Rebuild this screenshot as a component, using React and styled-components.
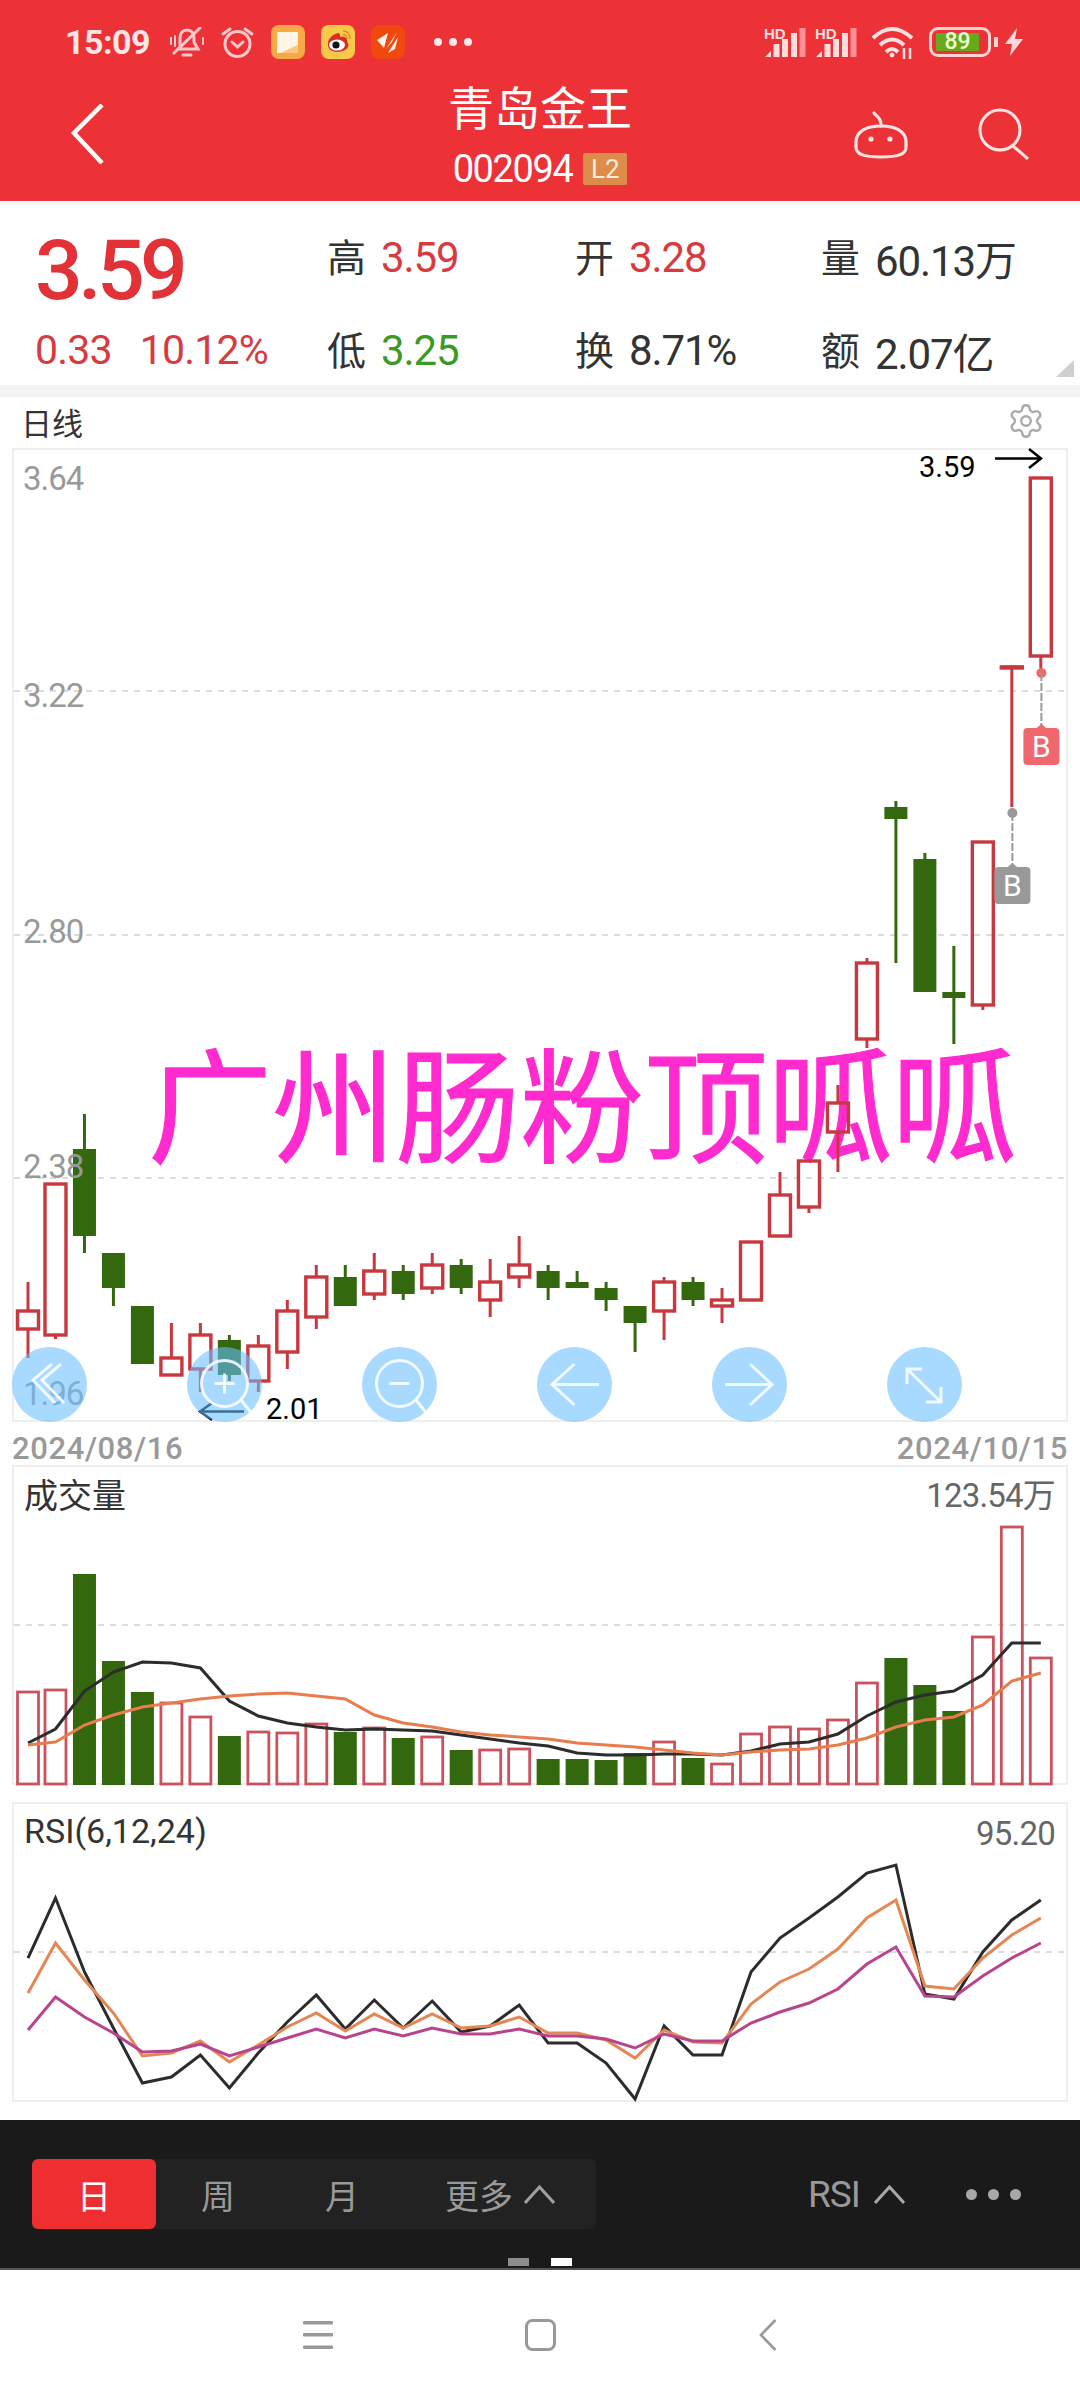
import React from "react";
import styled, { createGlobalStyle } from "styled-components";
import { Settings } from "lucide-react";

const RED = "#c8393f";
const GREEN = "#33680f";

// x of the n-th day, shared by all three charts
const dayX = (i) => (i === 0 ? 28 : 26.5 + 28.98 * i);

// [type, bodyTop, bodyBottom, wickTop, wickBottom]
const candles = [
    ["r", 1311, 1329, 1282, 1358],
    ["r", 1184, 1335, 1184, 1339],
    ["g", 1149, 1236, 1114, 1253],
    ["g", 1253, 1288, 1253, 1306],
    ["g", 1306, 1364, 1306, 1364],
    ["r", 1358, 1375, 1323, 1375],
    ["r", 1335, 1369, 1323, 1392],
    ["g", 1340, 1375, 1335, 1381],
    ["r", 1346, 1381, 1335, 1392],
    ["r", 1311, 1352, 1300, 1369],
    ["r", 1277, 1317, 1265, 1329],
    ["g", 1277, 1306, 1265, 1306],
    ["r", 1271, 1294, 1253, 1300],
    ["g", 1271, 1294, 1265, 1300],
    ["r", 1265, 1288, 1253, 1294],
    ["g", 1265, 1288, 1259, 1294],
    ["r", 1282, 1300, 1259, 1317],
    ["r", 1265, 1277, 1236, 1288],
    ["g", 1271, 1288, 1265, 1300],
    ["g", 1282, 1288, 1271, 1288],
    ["g", 1288, 1300, 1282, 1311],
    ["g", 1306, 1323, 1306, 1352],
    ["r", 1282, 1311, 1277, 1340],
    ["g", 1282, 1300, 1277, 1306],
    ["r", 1300, 1306, 1288, 1323],
    ["r", 1242, 1300, 1242, 1300],
    ["r", 1195, 1236, 1172, 1236],
    ["r", 1161, 1207, 1161, 1213],
    ["r", 1103, 1132, 1085, 1172],
    ["r", 963, 1039, 958, 1048],
    ["g", 807, 819, 801, 963],
    ["g", 859, 992, 853, 992],
    ["g", 992, 998, 946, 1044],
    ["r", 842, 1005, 842, 1010],
    ["r", 667, 668, 667, 807],
    ["r", 478, 656, 478, 668],
];

const volumeTops = [
    1692, 1690, 1574, 1661, 1692, 1703, 1717, 1736, 1732, 1733, 1724, 1732,
    1728, 1738, 1737, 1750, 1750, 1749, 1759, 1759, 1760, 1753, 1742, 1758,
    1764, 1734, 1727, 1729, 1720, 1683, 1658, 1685, 1711, 1637, 1527, 1658,
];

const volumeBlack = [
    1743, 1729, 1691, 1672, 1662, 1663, 1668, 1701, 1716, 1723, 1727, 1730,
    1729, 1730, 1731, 1735, 1739, 1743, 1746, 1753, 1755, 1755, 1754, 1754,
    1755, 1751, 1744, 1742, 1734, 1716, 1702, 1695, 1691, 1675, 1643, 1643,
];

const volumeOrange = [
    1745, 1742, 1725, 1715, 1707, 1703, 1699, 1696, 1694, 1693, 1696, 1699,
    1715, 1723, 1727, 1732, 1735, 1737, 1739, 1743, 1745, 1747, 1750, 1753,
    1755, 1752, 1750, 1749, 1745, 1738, 1727, 1720, 1717, 1705, 1681, 1673,
];

const rsiBlack = [
    1958, 1898, 1972, 2028, 2083, 2077, 2055, 2088, 2053, 2022, 1995, 2029,
    2000, 2028, 2001, 2032, 2026, 2005, 2043, 2043, 2063, 2099, 2026, 2055,
    2055, 1972, 1938, 1918, 1897, 1873, 1865, 1994, 1999, 1952, 1920, 1900,
];

const rsiOrange = [
    1993, 1943, 1980, 2013, 2056, 2053, 2041, 2062, 2045, 2027, 2013, 2031,
    2014, 2028, 2014, 2028, 2026, 2017, 2033, 2033, 2040, 2058, 2030, 2042,
    2043, 2004, 1982, 1969, 1949, 1918, 1900, 1986, 1989, 1958, 1935, 1918,
];

const rsiPink = [
    2030, 1997, 2017, 2033, 2052, 2051, 2044, 2056, 2047, 2038, 2029, 2038,
    2029, 2036, 2028, 2034, 2034, 2029, 2036, 2036, 2039, 2048, 2034, 2041,
    2041, 2023, 2012, 2003, 1989, 1964, 1947, 1996, 1997, 1976, 1958, 1943,
];

const toPoints = (values) =>
    values.map((y, i) => `${dayX(i).toFixed(1)},${y}`).join(" ");

function Candle({ i, data }) {
    const [type, top, bottom, wickTop, wickBottom] = data;
    const x = dayX(i);
    const color = type === "r" ? RED : GREEN;
    return (
        <g>
            <line x1={x} x2={x} y1={wickTop} y2={top} stroke={color} strokeWidth="3" />
            <line x1={x} x2={x} y1={bottom} y2={wickBottom} stroke={color} strokeWidth="3" />
            {type === "r" ? (
                <rect x={x - 10.5} y={top} width="21" height={bottom - top} fill="none" stroke={color} strokeWidth="3.4" />
            ) : (
                <rect x={x - 11.5} y={top} width="23" height={bottom - top} fill={color} />
            )}
        </g>
    );
}

function TradeMark({ x, dotY, tagY, color }) {
    return (
        <g>
            <circle cx={x} cy={dotY} r="5" fill={color} />
            <line x1={x} x2={x} y1={dotY} y2={tagY} stroke="#999" strokeWidth="2" strokeDasharray="8 2" />
            <path d={`M${x - 6} ${tagY + 1} L${x} ${tagY - 4} L${x + 6} ${tagY + 1} Z`} fill={color} />
            <rect x={x - 18} y={tagY} width="36" height="37" rx="4" fill={color} />
            <TagText x={x} y={tagY + 29}>B</TagText>
        </g>
    );
}

function GridLine({ y }) {
    return <line x1="14" x2="1066" y1={y} y2={y} stroke="#dcdcdc" strokeWidth="2" strokeDasharray="6 6" />;
}

function PriceChart() {
    return (
        <ChartSvg width="1056" height="974" viewBox="12 448 1056 974">
            <GridLine y={691} />
            <GridLine y={935} />
            <GridLine y={1178} />
            {candles.map((c, i) => (
                <Candle key={i} i={i} data={c} />
            ))}
            <TradeMark x={1012.4} dotY={813} tagY={867} color="#999999" />
            <TradeMark x={1041.4} dotY={673} tagY={728} color="#f0686e" />
            <line x1="1001" x2="1024" y1="667" y2="667" stroke={RED} strokeWidth="3" />
            <MarkText x="919" y="477">3.59</MarkText>
            <path d="M995 458.5 H1041 M1029 449 L1041 458.5 L1029 468" fill="none" stroke="#000" strokeWidth="2.5" />
            <path d="M244 1411.5 H200 M212 1403 L200 1411.5 L212 1420" fill="none" stroke="#000" strokeWidth="2.5" />
            <MarkText x="266" y="1419">2.01</MarkText>
        </ChartSvg>
    );
}

function VolumeChart() {
    return (
        <ChartSvg width="1056" height="320" viewBox="12 1465 1056 320">
            <GridLine y={1625} />
            {volumeTops.map((top, i) =>
                candles[i][0] === "r" ? (
                    <rect key={i} x={dayX(i) - 10.5} y={top} width="21" height={1784 - top} fill="none" stroke="#cb525d" strokeWidth="2.8" />
                ) : (
                    <rect key={i} x={dayX(i) - 11.5} y={top} width="23" height={1785 - top} fill={GREEN} />
                )
            )}
            <polyline points={toPoints(volumeBlack)} fill="none" stroke="#2c2c2c" strokeWidth="3" />
            <polyline points={toPoints(volumeOrange)} fill="none" stroke="#e97c4c" strokeWidth="3" />
        </ChartSvg>
    );
}

function RsiChart() {
    return (
        <ChartSvg width="1056" height="300" viewBox="12 1802 1056 300">
            <GridLine y={1952} />
            <polyline points={toPoints(rsiBlack)} fill="none" stroke="#2c2c2c" strokeWidth="3" />
            <polyline points={toPoints(rsiOrange)} fill="none" stroke="#e58755" strokeWidth="3" />
            <polyline points={toPoints(rsiPink)} fill="none" stroke="#b9448e" strokeWidth="3" />
        </ChartSvg>
    );
}

function BellOffIcon() {
    return (
        <svg width="34" height="31" viewBox="0 0 34 31" fill="none" stroke="#ffc9cc" strokeWidth="3" strokeLinecap="round">
            <path d="M10 21 V11 C10 6 13 3 17 3 C21 3 24 6 24 11 V15 L28 22 H8" />
            <path d="M13 28 H21" />
            <path d="M4 26 L30 1" />
            <path d="M1 11 V17 M5 9 V19 M33 11 V17" strokeWidth="2" />
        </svg>
    );
}

function AlarmIcon() {
    return (
        <svg width="35" height="32" viewBox="0 0 35 32" fill="none" stroke="#ffc9cc" strokeWidth="3" strokeLinecap="round">
            <circle cx="17.5" cy="18" r="12.5" />
            <path d="M3 8 L10 3 M32 8 L25 3" />
            <path d="M12 16 L17.5 21 L23 16" />
        </svg>
    );
}

function SheetApp() {
    return (
        <AppIcon $bg="#f8a947">
            <svg width="33" height="33" viewBox="0 0 33 33">
                <path d="M6 7 H27 V20 L10 28 H6 Z" fill="#fff6e6" />
                <path d="M10 28 L27 20 V28 Z" fill="#fbc680" />
            </svg>
        </AppIcon>
    );
}

function WeiboApp() {
    return (
        <AppIcon $bg="#f6c94a">
            <svg width="34" height="33" viewBox="0 0 34 33">
                <path d="M7 18 C7 13 13 9 17 8 C19 8 19 11 19 12 C23 11 27 13 26 17 C29 19 28 26 17 27 C10 27 6 23 7 18 Z" fill="#dd2a22" />
                <ellipse cx="16" cy="20" rx="8" ry="5.5" fill="#fff" />
                <circle cx="15" cy="20" r="3.6" fill="#111" />
                <path d="M22 6 C26 6 29 9 29 14 M22 9.5 C24 9.5 26 11 26 14" fill="none" stroke="#e8892a" strokeWidth="1.6" />
            </svg>
        </AppIcon>
    );
}

function FanApp() {
    return (
        <AppIcon $bg="#f0480f">
            <svg width="34" height="33" viewBox="0 0 34 33" fill="#fff4ea">
                <path d="M6 15 L17 8 L13 23 Z" />
                <path d="M15 24 L26 7 L21 17 Z" />
                <path d="M17 28 L27 12 L24 24 Z" />
            </svg>
        </AppIcon>
    );
}

function SignalIcon() {
    return (
        <SignalSvg width="44" height="36" viewBox="-2 -5 44 36">
            <HdText x="0" y="12">HD</HdText>
            <path d="M1 30 L7 24 V30 Z" fill="#ffdcdc" />
            <rect x="9.5" y="17" width="6" height="13" fill="#ffdcdc" />
            <rect x="18" y="12" width="6" height="18" fill="#ffdcdc" />
            <rect x="27" y="6" width="6" height="24" fill="#ffdcdc" />
            <rect x="35.5" y="1" width="6" height="29" fill="#ff8f94" />
        </SignalSvg>
    );
}

function WifiIcon() {
    return (
        <svg width="44" height="34" viewBox="0 0 44 34" fill="none" stroke="#ffe2e2" strokeWidth="4">
            <path d="M2 13 Q21 -5 41 13" />
            <path d="M9 20 Q21 9 33 20" />
            <path d="M15 27 Q21 21 27 27" />
            <circle cx="21" cy="30" r="2" fill="#ffe2e2" strokeWidth="1" />
            <path d="M33 23 V34 M39 23 V34" strokeWidth="2.5" />
        </svg>
    );
}

function BoltIcon() {
    return (
        <svg width="18" height="28" viewBox="0 0 18 28">
            <path d="M12 0 L0 16 H7 L5 28 L18 11 H10 Z" fill="#ffd9d9" />
        </svg>
    );
}

function BackIcon() {
    return (
        <svg width="33" height="60" viewBox="0 0 33 60" fill="none" stroke="#fff" strokeWidth="4.5">
            <path d="M31 1 L3 29 L31 59" />
        </svg>
    );
}

function RobotIcon() {
    return (
        <svg width="54" height="50" viewBox="0 0 54 50" fill="none" stroke="#ffe4e4" strokeWidth="3.2">
            <path d="M2 33 C2 22 13 17 27 17 C41 17 52 22 52 33 V38 C52 45 45 48 27 48 C9 48 2 45 2 38 Z" />
            <path d="M27 17 C27 9 24 9 20 4" strokeLinecap="round" />
            <circle cx="17" cy="30" r="2.6" fill="#ffe4e4" stroke="none" />
            <circle cx="36" cy="30" r="2.6" fill="#ffe4e4" stroke="none" />
        </svg>
    );
}

function SearchIcon() {
    return (
        <svg width="54" height="52" viewBox="0 0 54 52" fill="none" stroke="#ffe4e4" strokeWidth="3">
            <circle cx="24" cy="22" r="20" />
            <path d="M37 38 L52 51" />
        </svg>
    );
}

function Caret({ color }) {
    return (
        <svg width="31" height="20" viewBox="0 0 31 20" fill="none" stroke={color} strokeWidth="3">
            <path d="M1 19 L15.5 3 L30 19" />
        </svg>
    );
}

function RoundIcon({ children }) {
    return (
        <svg width="75" height="75" viewBox="0 0 75 75" fill="none" stroke="rgba(255,255,255,.85)" strokeWidth="3">
            {children}
        </svg>
    );
}

const mapButtons = [
    <path key="a" d="M40 17 L21 33 L43 56 M49 17 L30 33 L52 56" />,
    <g key="b">
        <circle cx="37.5" cy="36.5" r="23" />
        <path d="M54 53 L66 68" />
        <path d="M27.5 36.5 H47.5 M37.5 26.5 V46.5" />
    </g>,
    <g key="c">
        <circle cx="37.5" cy="36.5" r="23" />
        <path d="M54 53 L66 68" />
        <path d="M27.5 36.5 H47.5" />
    </g>,
    <path key="d" d="M62 37.5 H15 M37.5 17 L15 37.5 L37.5 58" />,
    <path key="e" d="M13 37.5 H60 M38 17 L60 37.5 L38 58" />,
    <path key="f" d="M20 22 L54 55 M20 37 V22 H35 M54 40 V55 H39" />,
];

function Stat({ label, value, tone }) {
    return (
        <StatCell>
            <StatLabel>{label}</StatLabel>
            <StatValue $tone={tone}>{value}</StatValue>
        </StatCell>
    );
}

export default function App() {
    return (
        <Page>
            <GlobalStyle />
            <Header>
                <StatusBar>
                    <StatusGroup>
                        <Clock>15:09</Clock>
                        <BellOffIcon />
                        <AlarmIcon />
                        <SheetApp />
                        <WeiboApp />
                        <FanApp />
                        <StatusDots>
                            <i />
                            <i />
                            <i />
                        </StatusDots>
                    </StatusGroup>
                    <StatusGroup>
                        <StatusItem>
                            <SignalIcon />
                        </StatusItem>
                        <StatusItem $left={11}>
                            <SignalIcon />
                        </StatusItem>
                        <StatusItem $left={16}>
                            <WifiIcon />
                        </StatusItem>
                        <StatusItem $left={14}>
                            <BatteryShell>
                                <BatteryFill>89</BatteryFill>
                            </BatteryShell>
                            <BatteryNub />
                        </StatusItem>
                        <StatusItem $left={7}>
                            <BoltIcon />
                        </StatusItem>
                    </StatusGroup>
                </StatusBar>
                <TitleBar>
                    <BackSlot>
                        <BackIcon />
                    </BackSlot>
                    <TitleBlock>
                        <Title>青岛金王</Title>
                        <CodeRow>
                            <Code>002094</Code>
                            <LevelBadge>L2</LevelBadge>
                        </CodeRow>
                    </TitleBlock>
                    <ActionSlot>
                        <RobotIcon />
                        <SearchIcon />
                    </ActionSlot>
                </TitleBar>
            </Header>

            <Quote>
                <PriceCell>
                    <BigPrice>3.59</BigPrice>
                </PriceCell>
                <Stat label="高" value="3.59" tone="#d83a3f" />
                <Stat label="开" value="3.28" tone="#d83a3f" />
                <Stat label="量" value="60.13万" />
                <ChangeCell>
                    <span>0.33</span>
                    <span>10.12%</span>
                </ChangeCell>
                <Stat label="低" value="3.25" tone="#3a9a24" />
                <Stat label="换" value="8.71%" />
                <Stat label="额" value="2.07亿" />
                <CornerMark />
            </Quote>
            <Band />

            <ChartHead>
                <PeriodName>日线</PeriodName>
                <Settings size={38} color="#aaaaaa" strokeWidth={1.5} />
            </ChartHead>

            <Panel $height={974}>
                <Watermark>广州肠粉顶呱呱</Watermark>
                <PriceChart />
                <AxisLabel $top={13}>3.64</AxisLabel>
                <AxisLabel $top={230}>3.22</AxisLabel>
                <AxisLabel $top={466}>2.80</AxisLabel>
                <AxisLabel $top={701}>2.38</AxisLabel>
                <AxisLabel $top={928}>1.96</AxisLabel>
                <RoundButtons>
                    {mapButtons.map((icon, i) => (
                        <RoundButton key={i}>
                            <RoundIcon>{icon}</RoundIcon>
                        </RoundButton>
                    ))}
                </RoundButtons>
            </Panel>

            <DateRow>
                <span>2024/08/16</span>
                <span>2024/10/15</span>
            </DateRow>

            <Panel $height={320}>
                <VolumeChart />
                <PanelTitle $top={8}>成交量</PanelTitle>
                <PanelValue $top={8}>123.54万</PanelValue>
            </Panel>

            <Panel $height={300} $gap={17}>
                <RsiChart />
                <PanelTitle $top={6}>RSI(6,12,24)</PanelTitle>
                <PanelValue $top={9}>95.20</PanelValue>
            </Panel>

            <Toolbar>
                <ToolRow>
                    <Periods>
                        <PeriodTab $active>日</PeriodTab>
                        <PeriodTab>周</PeriodTab>
                        <PeriodTab>月</PeriodTab>
                        <PeriodTab>
                            更多
                            <Caret color="#a0a0a0" />
                        </PeriodTab>
                    </Periods>
                    <ToolRight>
                        <IndicatorPick>
                            RSI
                            <Caret color="#a8a8a8" />
                        </IndicatorPick>
                        <MoreDots>
                            <i />
                            <i />
                            <i />
                        </MoreDots>
                    </ToolRight>
                </ToolRow>
                <Pager>
                    <PagerDot />
                    <PagerDot $active />
                </Pager>
            </Toolbar>

            <SystemNav>
                <NavSlot $w={221}>
                    <svg width="30" height="28" viewBox="0 0 30 28" fill="#999">
                        <rect width="30" height="3.5" rx="1" />
                        <rect y="12" width="30" height="3.5" rx="1" />
                        <rect y="24.5" width="30" height="3.5" rx="1" />
                    </svg>
                </NavSlot>
                <NavSlot $w={225}>
                    <svg width="31" height="32" viewBox="0 0 31 32" fill="none" stroke="#999" strokeWidth="3">
                        <rect x="1.5" y="1.5" width="28" height="29" rx="6" />
                    </svg>
                </NavSlot>
                <NavSlot $w={229}>
                    <svg width="18" height="32" viewBox="0 0 18 32" fill="none" stroke="#999" strokeWidth="2.6">
                        <path d="M16.5 1 L2 16 L16.5 31" />
                    </svg>
                </NavSlot>
            </SystemNav>
        </Page>
    );
}

const GlobalStyle = createGlobalStyle`
    html, body {
        margin: 0;
        padding: 0;
        background: #fff;
    }

    * {
        box-sizing: border-box;
    }
`;

const Page = styled.div`
    width: 1080px;
    height: 2400px;
    overflow: hidden;
    background: #fff;
    font-family: Roboto, "Noto Sans CJK SC", sans-serif;
`;

const Header = styled.header`
    height: 201px;
    background: #ec3237;
    display: flex;
    flex-direction: column;
`;

const StatusBar = styled.div`
    height: 66px;
    padding: 25px 57px 0 65px;
    display: flex;
    justify-content: space-between;
    align-items: flex-start;
`;

const StatusGroup = styled.div`
    display: flex;
    align-items: center;
    height: 34px;
    gap: 16px;

    &:last-child {
        gap: 0;
    }
`;

const StatusItem = styled.span`
    display: flex;
    align-items: center;
    margin-left: ${(p) => p.$left || 0}px;
`;

const SignalSvg = styled.svg`
    margin: -5px -2px 0 -2px;
`;

const Clock = styled.span`
    font-size: 34px;
    font-weight: 700;
    line-height: 34px;
    color: #ffe6e6;
    letter-spacing: -0.5px;
    width: 89px;
`;

const AppIcon = styled.div`
    width: 34px;
    height: 34px;
    border-radius: 8px;
    background: ${(p) => p.$bg};
    overflow: hidden;
`;

const StatusDots = styled.div`
    display: flex;
    gap: 7px;
    margin-left: 13px;

    i {
        width: 8px;
        height: 8px;
        border-radius: 50%;
        background: #ffe9e9;
    }
`;

const HdText = styled.text`
    font-family: "Liberation Sans", sans-serif;
    font-size: 15px;
    font-weight: 700;
    fill: #ffdcdc;
`;

const BatteryShell = styled.div`
    width: 62px;
    height: 30px;
    border: 3.5px solid #ffd3d3;
    border-radius: 9px;
    padding: 3px 9px 3px 4px;
    margin-right: 3px;
`;

const BatteryFill = styled.div`
    height: 100%;
    background: #67a81f;
    color: #ecffd0;
    font-size: 23px;
    font-weight: 500;
    line-height: 17px;
    text-align: center;
`;

const BatteryNub = styled.div`
    width: 4px;
    height: 10px;
    background: #ffd3d3;
`;

const TitleBar = styled.div`
    flex: 1;
    display: grid;
    grid-template-columns: 1fr auto 1fr;
    align-items: center;
`;

const BackSlot = styled.div`
    padding-left: 71px;
    display: flex;
`;

const TitleBlock = styled.div`
    display: flex;
    flex-direction: column;
    align-items: center;
    padding-top: 6px;
`;

const Title = styled.div`
    font-size: 46px;
    line-height: 44px;
    color: #fff;
    margin-bottom: 20px;
`;

const CodeRow = styled.div`
    display: flex;
    align-items: center;
    gap: 11px;
    height: 36px;
`;

const Code = styled.span`
    font-size: 38px;
    font-weight: 400;
    color: #fff;
    letter-spacing: -1.4px;
`;

const LevelBadge = styled.span`
    width: 44px;
    height: 32px;
    background: #dd8c49;
    color: #ffeedd;
    font-size: 26px;
    line-height: 32px;
    text-align: center;
    border-radius: 2px;
`;

const ActionSlot = styled.div`
    display: flex;
    justify-content: flex-end;
    align-items: center;
    gap: 68px;
    padding-right: 50px;
`;

const Quote = styled.section`
    position: relative;
    height: 184px;
    padding: 26px 0 0 36px;
    display: grid;
    grid-template-columns: 291px 248px 246px 1fr;
    grid-auto-rows: 60px;
    row-gap: 33px;
    align-items: center;
`;

const PriceCell = styled.div`
    height: 60px;
`;

const BigPrice = styled.div`
    margin: 8px 0 0 -1px;
    font-size: 84px;
    line-height: 72px;
    font-weight: 500;
    color: #e23237;
    letter-spacing: -4.6px;
`;

const ChangeCell = styled.div`
    display: flex;
    gap: 28px;
    margin-left: -1px;
    font-size: 41px;
    font-weight: 400;
    color: #d83a3f;
    letter-spacing: -0.8px;
`;

const StatCell = styled.div`
    display: flex;
    align-items: center;
    gap: 15px;
`;

const StatLabel = styled.span`
    font-size: 39px;
    color: #333;
    margin-bottom: 4px;
`;

const StatValue = styled.span`
    font-size: 42px;
    font-weight: 400;
    letter-spacing: -1.1px;
    color: ${(p) => p.$tone || "#333"};
`;

const CornerMark = styled.div`
    position: absolute;
    right: 6px;
    bottom: 8px;
    width: 18px;
    height: 17px;
    background: #cfcfcf;
    clip-path: polygon(100% 0, 100% 100%, 0 100%);
`;

const Band = styled.div`
    height: 12px;
    background: #f3f3f3;
`;

const ChartHead = styled.div`
    height: 51px;
    padding: 0 35px 3px 21px;
    display: flex;
    justify-content: space-between;
    align-items: center;
`;

const PeriodName = styled.span`
    font-size: 31px;
    color: #333;
`;

const Panel = styled.section`
    position: relative;
    width: 1056px;
    height: ${(p) => p.$height}px;
    margin: ${(p) => p.$gap || 0}px 0 0 12px;
    box-shadow: inset 0 0 0 2px #eeeeee;
`;

const ChartSvg = styled.svg`
    position: relative;
    display: block;
    overflow: visible;
`;

const Watermark = styled.div`
    position: absolute;
    left: 136px;
    top: 586px;
    white-space: nowrap;
    font-size: 124px;
    line-height: 130px;
    font-weight: 400;
    -webkit-text-stroke: 1.2px #ff2bcf;
    color: #ff2bcf;
    font-family: "Noto Sans CJK SC", sans-serif;
`;

const AxisLabel = styled.span`
    position: absolute;
    left: 11px;
    top: ${(p) => p.$top}px;
    font-size: 33px;
    line-height: 36px;
    letter-spacing: -1px;
    color: #999;
`;

const MarkText = styled.text`
    font-family: Roboto, sans-serif;
    font-size: 29px;
    fill: #000;
`;

const TagText = styled.text`
    font-family: Roboto, sans-serif;
    font-size: 30px;
    text-anchor: middle;
    fill: #fff;
`;

const RoundButtons = styled.div`
    position: absolute;
    left: 0;
    bottom: 0;
    display: flex;
    gap: 100px;
`;

const RoundButton = styled.div`
    width: 75px;
    height: 75px;
    border-radius: 50%;
    background: rgba(105, 190, 255, 0.58);
`;

const DateRow = styled.div`
    height: 43px;
    padding: 11px 12px 0 12px;
    display: flex;
    justify-content: space-between;
    font-size: 31px;
    line-height: 32px;
    color: #999;
    font-weight: 500;
    letter-spacing: 0.6px;
`;

const PanelTitle = styled.span`
    position: absolute;
    left: 12px;
    top: ${(p) => p.$top}px;
    font-size: 34px;
    line-height: 46px;
    color: #333;
`;

const PanelValue = styled.span`
    position: absolute;
    right: 13px;
    top: ${(p) => p.$top}px;
    font-size: 33px;
    line-height: 46px;
    font-weight: 400;
    color: #666;
    letter-spacing: -0.8px;
`;

const Toolbar = styled.div`
    height: 150px;
    margin-top: 18px;
    background: #1a1a1a;
    border-bottom: 2px solid #555;
    padding-top: 39px;
`;

const ToolRow = styled.div`
    height: 70px;
    display: flex;
    align-items: center;
    padding-left: 32px;
`;

const Periods = styled.div`
    width: 564px;
    height: 70px;
    background: #222;
    border-radius: 6px;
    display: grid;
    grid-template-columns: 124px 124px 124px 1fr;
`;

const PeriodTab = styled.div`
    display: flex;
    align-items: center;
    justify-content: center;
    gap: 11px;
    font-size: 34px;
    border-radius: 6px;
    color: ${(p) => (p.$active ? "#fff" : "#999")};
    background: ${(p) => (p.$active ? "#ee2e30" : "transparent")};
`;

const ToolRight = styled.div`
    margin-left: 212px;
    display: flex;
    align-items: center;
`;

const IndicatorPick = styled.div`
    display: flex;
    align-items: center;
    gap: 14px;
    font-size: 37px;
    letter-spacing: -1px;
    color: #999;
`;

const MoreDots = styled.div`
    display: flex;
    gap: 11px;
    margin-left: 61px;

    i {
        width: 11px;
        height: 11px;
        border-radius: 50%;
        background: #a8a8a8;
    }
`;

const Pager = styled.div`
    display: flex;
    justify-content: center;
    gap: 22px;
    margin-top: 29px;
`;

const PagerDot = styled.span`
    width: 21px;
    height: 8px;
    background: ${(p) => (p.$active ? "#fff" : "#8c8c8c")};
`;

const SystemNav = styled.nav`
    height: 130px;
    padding-left: 207px;
    display: flex;
    align-items: center;
`;

const NavSlot = styled.div`
    width: ${(p) => p.$w}px;
    display: flex;
    justify-content: center;
`;
